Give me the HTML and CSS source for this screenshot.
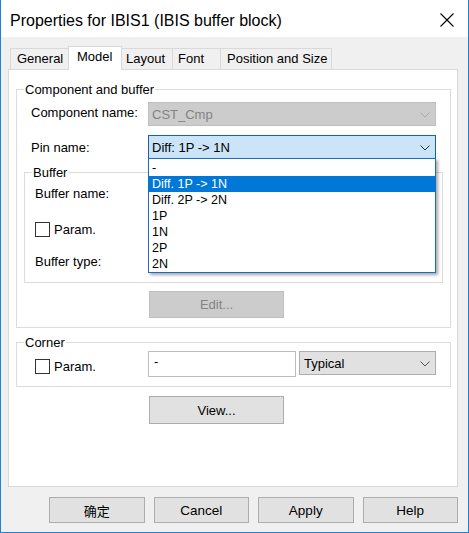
FILE: index.html
```html
<!DOCTYPE html>
<html>
<head>
<meta charset="utf-8">
<link rel="stylesheet" href="styles.css">
</head>
<body>
<div class="window">
  <div class="titlebar">
    <span class="title">Properties for IBIS1 (IBIS buffer block)</span>
    <svg class="close" width="14" height="14" viewBox="0 0 14 14"><path d="M0.5 0.5 L13.5 13.5 M13.5 0.5 L0.5 13.5" stroke="#000" stroke-width="1.1" fill="none"/></svg>
  </div>
  <div class="body">
    <div class="tabs">
      <div class="tab t-general">General</div>
      <div class="tab t-model selected">Model</div>
      <div class="tab t-layout">Layout</div>
      <div class="tab t-font">Font</div>
      <div class="tab t-pos">Position and Size</div>
    </div>
    <div class="panel">
      <div class="group group-main">
        <div class="group-title">Component and buffer</div>
        <div class="row row-comp">
          <span class="label">Component name:</span>
          <div class="combo disabled">
            <span class="value">CST_Cmp</span>
            <svg class="chev" width="10" height="6" viewBox="0 0 10 6"><path d="M0.5 0.5 L5 5 L9.5 0.5" stroke="#a6a6a6" fill="none"/></svg>
          </div>
        </div>
        <div class="row row-pin">
          <span class="label">Pin name:</span>
          <div class="combo focused">
            <span class="value">Diff: 1P -&gt; 1N</span>
            <svg class="chev" width="10" height="6" viewBox="0 0 10 6"><path d="M0.5 0.5 L5 5 L9.5 0.5" stroke="#333" fill="none"/></svg>
            <div class="droplist">
              <div class="item">-</div>
              <div class="item active">Diff. 1P -&gt; 1N</div>
              <div class="item">Diff. 2P -&gt; 2N</div>
              <div class="item">1P</div>
              <div class="item">1N</div>
              <div class="item">2P</div>
              <div class="item">2N</div>
            </div>
          </div>
        </div>
        <div class="group group-buffer">
          <div class="group-title">Buffer</div>
          <div class="brow brow-name"><span class="label">Buffer name:</span></div>
          <div class="brow brow-param"><span class="check"></span><span class="label">Param.</span></div>
          <div class="brow brow-type"><span class="label">Buffer type:</span></div>
        </div>
        <div class="btn disabled edit">Edit...</div>
      </div>
      <div class="group group-corner">
        <div class="group-title">Corner</div>
        <div class="corner-row">
          <div class="corner-param"><span class="check"></span><span class="label">Param.</span></div>
          <div class="textbox">-</div>
          <div class="combo plain">
            <span class="value">Typical</span>
            <svg class="chev" width="10" height="6" viewBox="0 0 10 6"><path d="M0.5 0.5 L5 5 L9.5 0.5" stroke="#555" fill="none"/></svg>
          </div>
        </div>
      </div>
      <div class="btn view">View...</div>
    </div>
    <div class="footer">
      <div class="btn fbtn cjk">确定</div>
      <div class="btn fbtn">Cancel</div>
      <div class="btn fbtn">Apply</div>
      <div class="btn fbtn">Help</div>
    </div>
  </div>
</div>
</body>
</html>
```

FILE: styles.css
```css
* { box-sizing: border-box; }
html, body { margin: 0; padding: 0; }
body {
  width: 469px;
  height: 533px;
  font-family: "Liberation Sans", Arial, sans-serif;
  font-size: 13px;
  color: #000;
  background: #f0f0f0;
}
.window {
  width: 469px;
  height: 533px;
  background: #f0f0f0;
  border-left: 1px solid #1883d7;
  border-right: 1px solid #1883d7;
  border-bottom: 1px solid #1883d7;
}
.titlebar {
  height: 37px;
  background: #fff;
  display: flex;
  align-items: flex-start;
  padding: 4px 0 0 9px;
}
.title {
  font-size: 16px;
  line-height: 33px;
  flex: 1;
}
.close {
  margin: 9px 14px 0 0;
}
.body {
  padding: 0 10px 0 7px;
}
.tabs {
  display: flex;
  align-items: flex-end;
  height: 32px;
  padding: 9px 0 0 2px;
}
.tab {
  height: 21px;
  border: 1px solid #d9d9d9;
  border-bottom: none;
  background: #f0f0f0;
  line-height: 19px;
  margin-right: -1px;
  padding-left: 5px;
  white-space: nowrap;
}
.t-general { width: 59px; padding-left: 6px; }
.t-model { width: 54px; }
.t-layout { width: 52px; padding-left: 4px; }
.t-font { width: 49px; padding-left: 5px; }
.t-pos { width: 112px; padding-left: 6px; }
.tab.selected {
  height: 24px;
  background: #fff;
  margin-bottom: -1px;
  position: relative;
  z-index: 2;
  padding-left: 8px;
  line-height: 19px;
}
.panel {
  height: 418px;
  background: #fff;
  border: 1px solid #d9d9d9;
  position: relative;
}
.group {
  border: 1px solid #dcdcdc;
}
.group-title {
  margin: -8px 0 0 7px;
  padding: 0 1px;
  line-height: 15px;
  height: 15px;
  background: #fff;
  width: fit-content;
}
.group-main {
  margin: 19px 6px 0 7px;
  padding-bottom: 9px;
}
.row {
  display: grid;
  grid-template-columns: 131px 288px;
  height: 24px;
  align-items: center;
}
.row .label { padding-left: 14px; }
.row-comp { margin-top: 5px; }
.row-comp .label { margin-top: -4px; }
.row-pin { margin-top: 9px; }
.combo {
  height: 24px;
  border: 1px solid #adadad;
  background: #e1e1e1;
  display: flex;
  align-items: center;
  padding-left: 3px;
  position: relative;
}
.combo .value { flex: 1; white-space: nowrap; }
.combo .chev { margin-right: 5px; margin-top: 1px; }
.combo.disabled {
  background: #cccccc;
  border-color: #bfbfbf;
  color: #838383;
}
.combo.focused {
  background: #cce4f7;
  border-color: #1662ac;
}
.combo.plain {
  height: 24px;
  width: 137px;
  margin-left: 3px;
  padding-left: 4px;
}
.droplist {
  position: absolute;
  left: -1px;
  top: 22px;
  width: 288px;
  background: #fff;
  border: 1px solid #1a6dc0;
  padding-top: 1px;
  box-shadow: 2px 2px 3px rgba(0,0,0,0.35);
  z-index: 5;
  color: #000;
}
.droplist .item {
  height: 16px;
  line-height: 16px;
  padding-left: 3px;
  font-size: 12.5px;
  white-space: nowrap;
}
.droplist .item.active {
  background: #0078d7;
  color: #fff;
}
.group-buffer {
  margin: 13px 7px 0 7px;
  padding-bottom: 9px;
}
.brow {
  height: 24px;
  display: flex;
  align-items: center;
  padding-left: 10px;
}
.brow-name { margin-top: 1px; }
.brow-param { margin-top: 12px; }
.brow-type { margin-top: 8px; }
.check {
  display: inline-block;
  width: 15px;
  height: 15px;
  border: 1px solid #333;
  background: #fff;
  margin-right: 4px;
}
.btn {
  height: 26px;
  width: 135px;
  border: 1px solid #adadad;
  background: #e1e1e1;
  display: flex;
  align-items: center;
  justify-content: center;
}
.btn.disabled {
  background: #cccccc;
  border-color: #bfbfbf;
  color: #838383;
}
.edit {
  margin: 8px 0 0 132px;
  height: 27px;
}
.group-corner {
  margin: 14px 6px 0 7px;
  padding-bottom: 9px;
}
.corner-row {
  display: flex;
  align-items: flex-start;
  margin-top: 1px;
  height: 26px;
}
.corner-param {
  width: 131px;
  padding-left: 18px;
  margin-top: 8px;
  display: flex;
  align-items: center;
  height: 15px;
}
.textbox {
  width: 148px;
  height: 26px;
  border: 1px solid #bdbdbd;
  background: #fff;
  padding: 2px 0 0 5px;
  line-height: 15px;
}
.view {
  margin: 9px 0 0 140px;
  height: 28px;
}
.footer {
  display: flex;
  gap: 9px;
  padding: 10px 0 0 41px;
}
.fbtn {
  width: 96px;
  height: 26px;
  font-size: 13.5px;
}
.cjk {
  font-family: "Noto Sans CJK SC", sans-serif;
  font-size: 13px;
}
```
